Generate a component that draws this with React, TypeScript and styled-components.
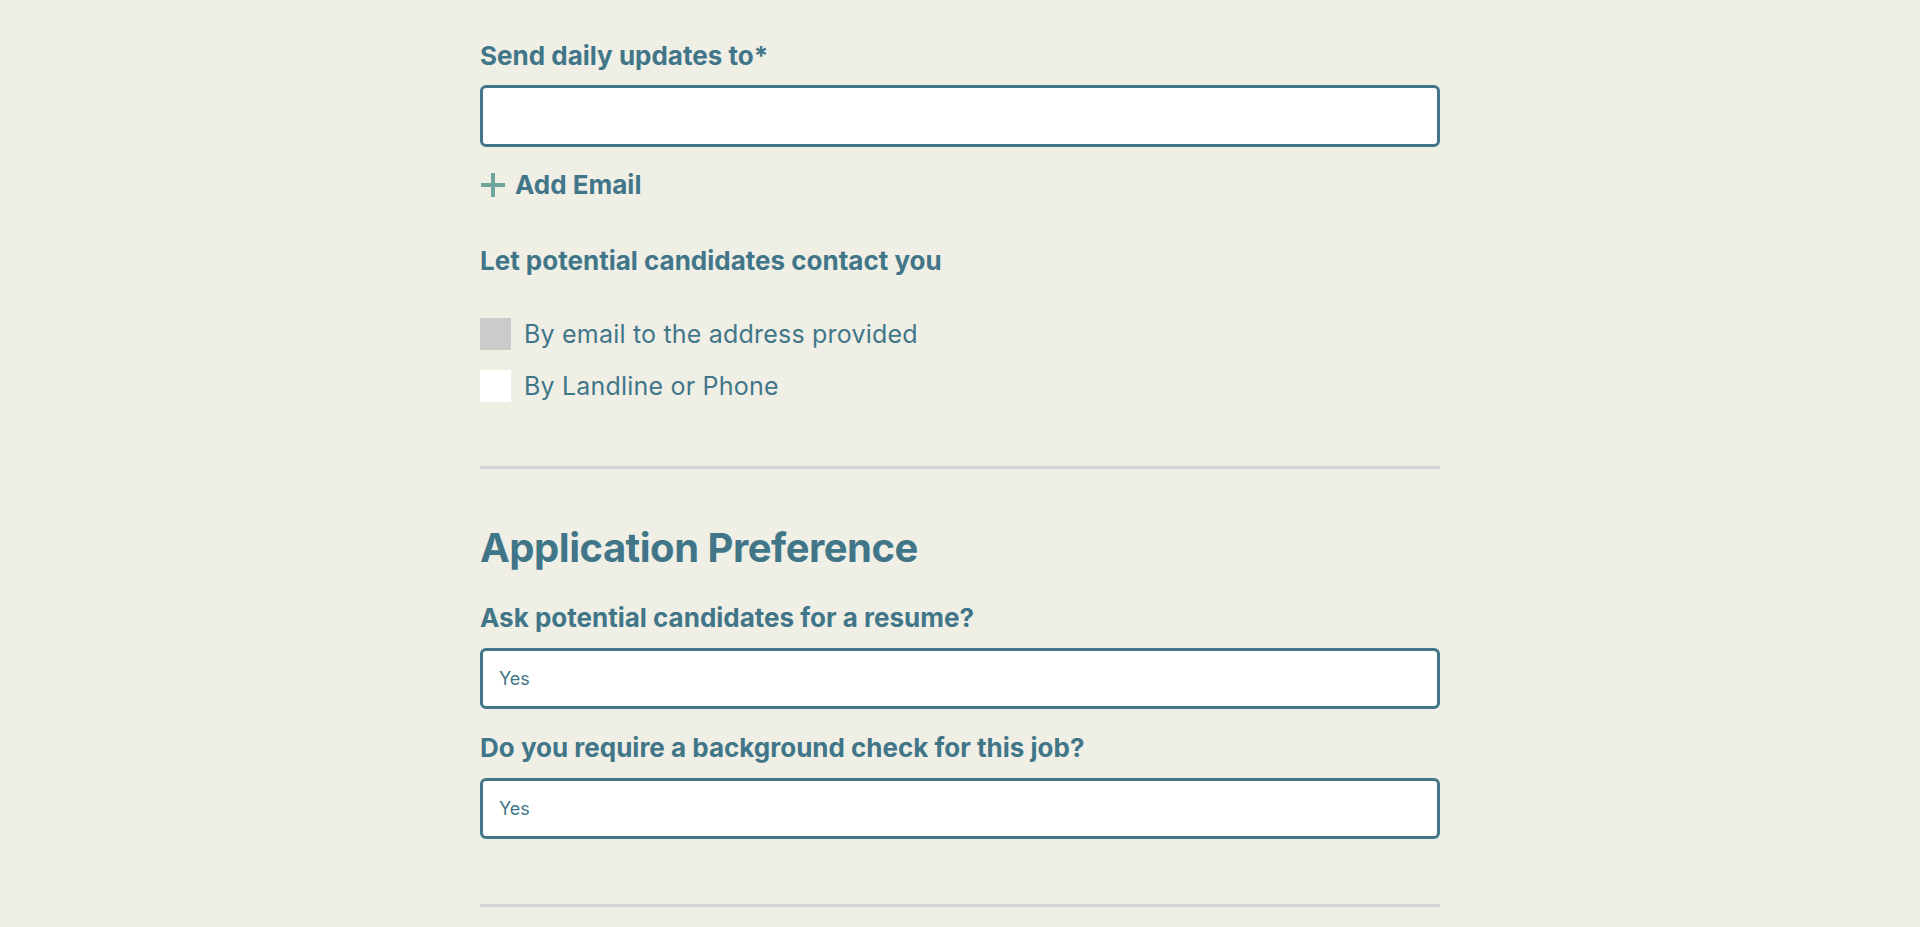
import styled, { createGlobalStyle } from 'styled-components';

const teal = '#417689';
const font = "Inter, 'Liberation Sans', sans-serif";

const GlobalStyle = createGlobalStyle`
	html, body {
		margin: 0;
		padding: 0;
		background: #f0efe6;
	}

	body {
		font-family: ${font};
		color: ${teal};
	}
`;

const Page = styled.div`
	min-height: 927px;
	background: #f0efe6;
`;

const Form = styled.form`
	width: 960px;
	margin: 0 auto;
	padding-top: 41px;
	display: flex;
	flex-direction: column;
`;

const Label = styled.label<{ $gap?: number }>`
	display: block;
	margin-top: ${(props) => props.$gap ?? 0}px;
	font-size: 26px;
	line-height: 30px;
	font-weight: 700;
	color: ${teal};
`;

const TextInput = styled.input<{ $height?: number; $gap?: number }>`
	box-sizing: border-box;
	width: 100%;
	height: ${(props) => props.$height ?? 60}px;
	margin-top: ${(props) => props.$gap ?? 15}px;
	padding: 0 16px;
	border: 3px solid ${teal};
	border-radius: 6px;
	background: #fff;
	font-family: ${font};
	font-size: 18px;
	color: ${teal};
	outline: none;
`;

const AddButton = styled.button`
	display: flex;
	align-items: center;
	gap: 9px;
	align-self: flex-start;
	margin-top: 25px;
	padding: 0;
	border: 0;
	background: none;
	font-family: ${font};
	font-size: 26px;
	font-weight: 700;
	line-height: 26px;
	color: ${teal};
	cursor: pointer;
`;

const CheckList = styled.div`
	display: flex;
	flex-direction: column;
	gap: 20px;
	margin-top: 42px;
`;

const CheckRow = styled.label`
	display: flex;
	align-items: center;
	gap: 13px;
	height: 32px;
	font-size: 25px;
	font-weight: 400;
	letter-spacing: 0.2px;
	color: ${teal};
`;

const CheckBox = styled.span<{ $checked?: boolean }>`
	width: 31px;
	height: 32px;
	background: ${(props) => (props.$checked ? '#cbcbcb' : '#ffffff')};
`;

const Divider = styled.hr<{ $gap: number }>`
	width: 100%;
	height: 3px;
	margin: ${(props) => props.$gap}px 0 0;
	border: 0;
	background: #d3d3d3;
`;

const Heading = styled.h2`
	margin: 54px 0 0;
	font-size: 40px;
	line-height: 50px;
	font-weight: 700;
	letter-spacing: -0.5px;
	color: ${teal};
`;

const PlusIcon = () => (
	<svg width="26" height="26" viewBox="0 0 26 26" aria-hidden="true">
		<path d="M13 1v24M1 13h24" stroke="#6fa59c" strokeWidth="4" />
	</svg>
);

const App = () => {
	return (
		<Page>
			<GlobalStyle />
			<Form>
				<Label>Send daily updates to*</Label>
				<TextInput type="email" $height={62} $gap={14} />
				<AddButton type="button">
					<PlusIcon />
					Add Email
				</AddButton>

				<Label $gap={48}>Let potential candidates contact you</Label>
				<CheckList>
					<CheckRow>
						<CheckBox $checked />
						By email to the address provided
					</CheckRow>
					<CheckRow>
						<CheckBox />
						By Landline or Phone
					</CheckRow>
				</CheckList>

				<Divider $gap={64} />

				<Heading>Application Preference</Heading>
				<Label $gap={30}>Ask potential candidates for a resume?</Label>
				<TextInput defaultValue="Yes" $height={61} />
				<Label $gap={24}>Do you require a background check for this job?</Label>
				<TextInput defaultValue="Yes" $height={61} />

				<Divider $gap={65} />
			</Form>
		</Page>
	);
};

export default App;
